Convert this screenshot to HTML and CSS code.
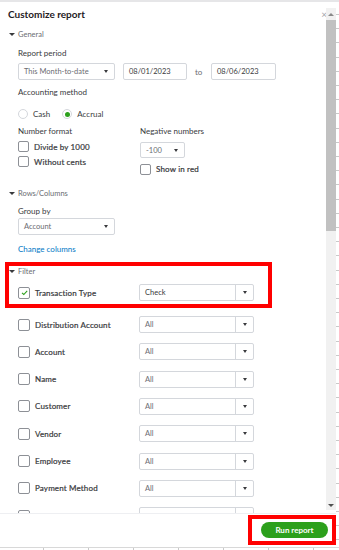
FILE: index.html
```html
<!DOCTYPE html>
<html lang="en">
<head>
  <meta charset="UTF-8">
  <title>Customize report</title>
  <link rel="stylesheet" href="styles.css">
</head>
<body>
  <div class="top-line"></div>
  <div class="window">
    <div class="panel">
      <div class="main">
        <div class="content">
          <div class="title-row">
            <h1 class="title">Customize report</h1>
            <span class="close">&times;</span>
          </div>

          <div class="section-head first"><span class="caret"></span>General</div>
          <div class="label">Report period</div>
          <div class="period-row">
            <div class="select period-select"><span class="value">This Month-to-date</span><span class="arrow plain"></span></div>
            <div class="input date-from">08/01/2023</div>
            <span class="to">to</span>
            <div class="input date-to">08/06/2023</div>
          </div>

          <div class="label accounting">Accounting method</div>
          <div class="radio-row">
            <span class="radio"></span><span class="radio-label">Cash</span>
            <span class="radio on"></span><span class="radio-label">Accrual</span>
          </div>

          <div class="two-cols">
            <div class="col number-col">
              <div class="label">Number format</div>
              <label class="check-row"><span class="box"></span>Divide by 1000</label>
              <label class="check-row"><span class="box"></span>Without cents</label>
            </div>
            <div class="col negative-col">
              <div class="label">Negative numbers</div>
              <div class="select neg-select"><span class="value">-100</span><span class="arrow plain"></span></div>
              <label class="check-row red-row"><span class="box"></span>Show in red</label>
            </div>
          </div>

          <div class="section-head rows-head"><span class="caret"></span>Rows/Columns</div>
          <div class="label group-label">Group by</div>
          <div class="select group-select"><span class="value">Account</span><span class="arrow plain"></span></div>
          <a class="link">Change columns</a>

          <div class="highlight filter-box">
            <div class="section-head filter-head"><span class="caret"></span>Filter</div>
            <div class="filter-row">
              <span class="box checked">
                <svg width="9" height="9" viewBox="0 0 9 9"><path d="M2 4.8 L3.8 6.5 L7.2 2.8" fill="none" stroke="#2ca01c" stroke-width="1.1"/></svg>
              </span>
              <span class="filter-name">Transaction Type</span>
              <div class="select filter-select"><span class="value dark">Check</span><span class="arrow"></span></div>
            </div>
          </div>

          <div class="filter-list" id="filter-list"></div>
        </div>

        <div class="scrollbar">
          <span class="scroll-up"></span>
          <span class="thumb"></span>
          <span class="scroll-down"></span>
        </div>
      </div>

      <div class="footer">
        <div class="highlight run-box">
          <button class="run-btn">Run report</button>
        </div>
      </div>
    </div>
    <div class="edge"></div>
  </div>
  <div class="bottom-line"></div>

  <script>
    const filters = ["Distribution Account", "Account", "Name", "Customer", "Vendor", "Employee", "Payment Method"];
    const list = document.getElementById("filter-list");
    filters.forEach(name => {
      const row = document.createElement("div");
      row.classList.add("filter-row");
      row.innerHTML = `<span class="box"></span><span class="filter-name">${name}</span>` +
        `<div class="select filter-select"><span class="value">All</span><span class="arrow"></span></div>`;
      list.appendChild(row);
    });
    // next row is scrolled out of view, only its top edge peeks above the footer
    const peek = document.createElement("div");
    peek.classList.add("filter-row");
    peek.innerHTML = `<span class="box"></span><span class="filter-name"></span>` +
      `<div class="select filter-select"><span class="value"></span><span class="arrow"></span></div>`;
    list.appendChild(peek);
  </script>
</body>
</html>
```

FILE: styles.css
```css
body {
  margin: 0;
  width: 339px;
  height: 550px;
  overflow: hidden;
  background: #fff;
  font-family: 'Lato', 'Liberation Sans', sans-serif;
  color: #393a3d;
  font-size: 8px;
}

.top-line {
  height: 2px;
  background: #e6e6e8;
}

.window {
  display: flex;
  height: 545px;
}

.panel {
  width: 336px;
  display: flex;
  flex-direction: column;
}

.main {
  height: 511px;
  display: flex;
}

.content {
  flex: 1;
  overflow: hidden;
  padding-left: 9px;
}

/* Title */
.title-row {
  display: flex;
  justify-content: space-between;
  align-items: center;
  margin-top: 4px;
  height: 16px;
}

.title {
  margin: 0 0 0 -1px;
  font-size: 10px;
  font-weight: 700;
  color: #1f2024;
}

.close {
  color: #a3a5aa;
  font-size: 10px;
  line-height: 10px;
  margin-right: -1px;
}

/* Section headings */
.section-head {
  display: flex;
  align-items: center;
  height: 12px;
  font-size: 7.5px;
  color: #6b6c72;
}

.caret {
  width: 0;
  height: 0;
  border-left: 3px solid transparent;
  border-right: 3px solid transparent;
  border-top: 3.5px solid #393a3d;
  margin-right: 3px;
}

.section-head.first { margin-top: 6px; }
.rows-head { margin-top: 12px; }

.label {
  height: 12px;
  line-height: 12px;
  margin-left: 9px;
  font-size: 8px;
  color: #393a3d;
  margin-top: 7px;
}

.accounting { margin-top: 6px; }
.group-label { margin-top: 6px; }

/* Inputs and selects */
.select,
.input {
  box-sizing: border-box;
  height: 17px;
  border: 1px solid #d4d7dc;
  border-radius: 2px;
  display: flex;
  align-items: center;
  background: #fff;
  font-size: 7.5px;
  color: #6b6c72;
}

.select .value {
  flex: 1;
  padding-left: 5px;
  white-space: nowrap;
  overflow: hidden;
}

.select .value.dark { color: #393a3d; }

.arrow {
  width: 17px;
  height: 100%;
  border-left: 1px solid #d4d7dc;
  display: flex;
  align-items: center;
  justify-content: center;
}

.arrow.plain { border-left: none; width: 16px; }

.arrow::after {
  content: "";
  border-left: 2.5px solid transparent;
  border-right: 2.5px solid transparent;
  border-top: 3px solid #393a3d;
}

.period-row {
  display: flex;
  align-items: center;
  margin-top: 4px;
  margin-left: 9px;
}

.period-select { width: 97px; }

.input {
  padding-left: 5px;
  color: #393a3d;
}

.date-from { width: 64px; margin-left: 8px; }
.to { margin: 0 8px 0 8px; color: #6b6c72; width: 9px; }
.date-to { width: 65px; margin-left: -1px; }

/* Radios */
.radio-row {
  display: flex;
  align-items: center;
  height: 12px;
  margin-top: 10px;
  margin-left: 9px;
  font-size: 8px;
}

.radio {
  box-sizing: border-box;
  width: 10px;
  height: 10px;
  border: 1px solid #d4d7dc;
  border-radius: 50%;
  display: flex;
  align-items: center;
  justify-content: center;
}

.radio.on::after {
  content: "";
  width: 5px;
  height: 5px;
  border-radius: 50%;
  background: #2ca01c;
}

.radio-label { margin: 0 12px 0 5px; }

/* Number format / negative numbers */
.two-cols {
  display: flex;
}

.col .label { margin-top: 5px; margin-left: 0; }

.number-col {
  width: 122px;
  padding-left: 9px;
}

.check-row {
  display: flex;
  align-items: center;
  height: 15px;
  font-size: 8px;
  color: #393a3d;
  -webkit-text-stroke: 0.2px #393a3d;
  letter-spacing: 0.15px;
}

.number-col .label + .check-row { margin-top: 2px; }

.box {
  box-sizing: border-box;
  width: 11px;
  height: 11px;
  border: 1px solid #8d9096;
  border-radius: 2px;
  background: #fff;
  margin-right: 5px;
  flex-shrink: 0;
  display: flex;
  align-items: center;
  justify-content: center;
}

.neg-select {
  width: 45px;
  height: 16px;
  margin-top: 5px;
}

.red-row {
  height: 12px;
  margin-top: 5px;
}

/* Rows/Columns */
.group-select {
  width: 97px;
  margin-top: 1px;
  margin-left: 9px;
}

.link {
  display: block;
  height: 12px;
  line-height: 12px;
  margin-top: 8px;
  margin-left: 9px;
  color: #0077c5;
  font-size: 8px;
}

/* Highlight boxes drawn around the important controls */
.highlight {
  border: 4px solid #ff0000;
  box-sizing: border-box;
}

.filter-box {
  width: 267px;
  height: 46px;
  margin-top: 7px;
  margin-left: -4px;
}

.filter-head {
  height: 10px;
}

/* Filter rows */
.filter-row {
  display: flex;
  align-items: center;
  height: 17px;
  margin-top: 10.33px;
  margin-left: 9px;
}

.filter-box .filter-row { margin-top: 8px; }

.filter-list .filter-row:first-child { margin-top: 8px; }

.filter-row .box { width: 12px; height: 12px; }

.filter-name {
  width: 104px;
  font-size: 8px;
  color: #393a3d;
  -webkit-text-stroke: 0.2px #393a3d;
  letter-spacing: 0.15px;
}

.filter-select {
  width: 115px;
}

/* Fake scrollbar */
.scrollbar {
  width: 10px;
  margin: 6px 0 3px;
  background: #f1f1f1;
  display: flex;
  flex-direction: column;
  align-items: center;
}

.scroll-up,
.scroll-down {
  width: 0;
  height: 0;
  border-left: 3px solid transparent;
  border-right: 3px solid transparent;
}

.scroll-up {
  margin-top: 5px;
  border-bottom: 3px solid #8a8a8a;
}

.thumb {
  width: 10px;
  height: 211px;
  margin-top: 4px;
  background: #c1c1c1;
}

.scroll-down {
  margin-top: auto;
  margin-bottom: 3px;
  border-top: 3px solid #505050;
}

/* Footer */
.footer {
  flex: 1;
  border-top: 1px solid #eeeff2;
  display: flex;
  justify-content: flex-end;
  align-items: flex-start;
}

.run-box {
  width: 88px;
  height: 30px;
  margin-top: 1px;
  padding: 3px 4px 0 9px;
}

.run-btn {
  width: 67px;
  height: 16px;
  border: none;
  border-radius: 9px;
  background: #2ca01c;
  color: #fff;
  font-family: 'Lato', 'Liberation Sans', sans-serif;
  font-size: 8px;
  font-weight: 700;
  padding: 0;
}

/* Page behind the panel */
.edge {
  width: 3px;
  background: repeating-linear-gradient(to bottom, transparent 0 12px, #c9c9c9 12px 13px, transparent 13px 14.2px);
}

.bottom-line {
  height: 3px;
  border-top: 1px solid #d8d8d8;
  background: repeating-linear-gradient(to right, transparent 0 43px, #c9c9c9 43px 44px, transparent 44px 45px);
}
```
